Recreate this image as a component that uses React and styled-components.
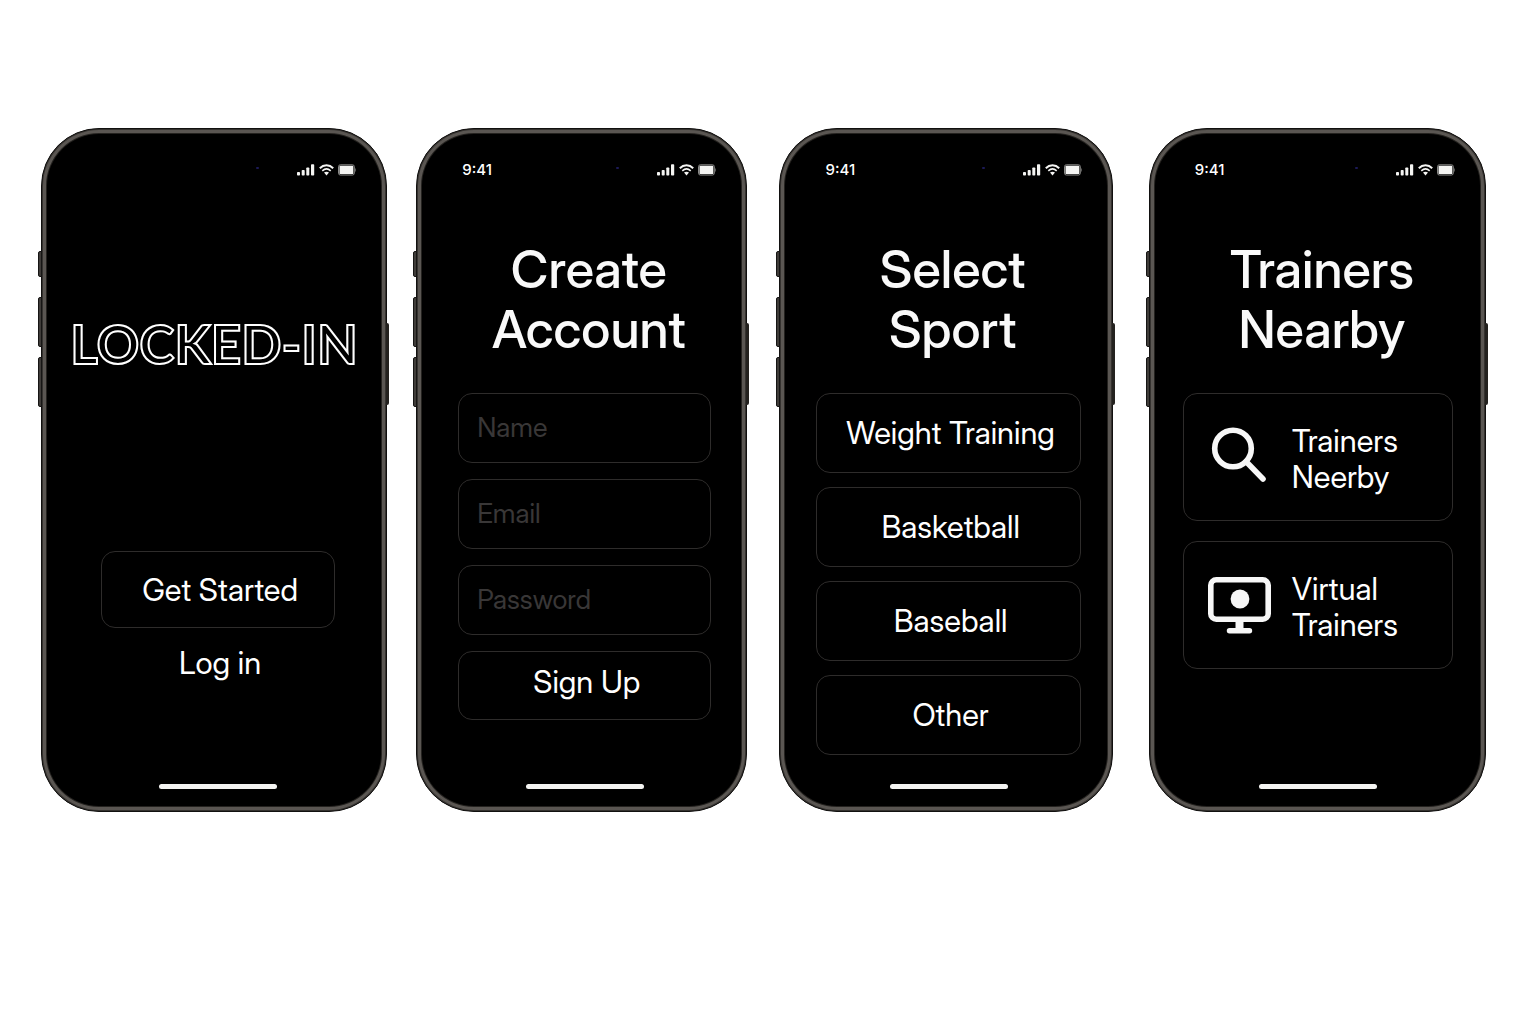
import React from "react";
import styled, { createGlobalStyle } from "styled-components";

const sports = ["Weight Training", "Basketball", "Baseball", "Other"];

const fields = [
  { name: "name", label: "Name", type: "text" },
  { name: "email", label: "Email", type: "email" },
  { name: "password", label: "Password", type: "password" },
];

const SignalIcon = () => (
  <svg width="18" height="12" viewBox="0 0 18 12" fill="#f4f4f2" aria-hidden="true">
    <rect x="0" y="8" width="3" height="3.5" rx="0.8" />
    <rect x="4.7" y="6" width="3" height="5.5" rx="0.8" />
    <rect x="9.3" y="3.5" width="3" height="8" rx="0.8" />
    <rect x="14" y="0.3" width="3.2" height="11.2" rx="0.8" />
  </svg>
);

const WifiIcon = () => (
  <svg width="15" height="12" viewBox="0 0 15 12" fill="none" stroke="#f4f4f2" aria-hidden="true">
    <path d="M0.8 4.2C4.6 0.4 10.4 0.4 14.2 4.2" strokeWidth="2" />
    <path d="M3.3 6.8C5.8 4.5 9.2 4.5 11.7 6.8" strokeWidth="1.6" />
    <path d="M5 8.6C6.5 7.3 8.5 7.3 10 8.6L7.5 11.4Z" fill="#f4f4f2" stroke="none" />
  </svg>
);

const BatteryIcon = () => (
  <svg width="18" height="12" viewBox="0 0 18 12" aria-hidden="true">
    <rect x="0.5" y="0.8" width="15.8" height="10.2" rx="1.8" fill="none" stroke="#8a8a88" />
    <rect x="1.5" y="1.8" width="13.8" height="8.2" rx="0.6" fill="#f4f4f2" />
    <path d="M17.3 4.5V7.5" stroke="#6a6a68" />
  </svg>
);

const SearchIcon = () => (
  <svg width="64" height="64" viewBox="0 0 64 64" fill="none" stroke="#f7f7f7" aria-hidden="true">
    <circle cx="26" cy="23.5" r="18.3" strokeWidth="5.6" />
    <path d="M39 36.5L56 54" strokeWidth="5.6" strokeLinecap="round" />
  </svg>
);

const MonitorIcon = () => (
  <svg width="64" height="64" viewBox="0 0 64 64" fill="none" stroke="#f7f7f7" aria-hidden="true">
    <rect x="3.8" y="6.8" width="57.4" height="39.4" rx="5.5" strokeWidth="5.6" />
    <circle cx="33" cy="26" r="9.4" fill="#f7f7f7" stroke="none" />
    <path d="M32.5 47V58" strokeWidth="8" />
    <path d="M22.5 57.8H42.5" strokeWidth="5.4" strokeLinecap="round" />
  </svg>
);

const Phone = ({ time, grow, gap, inset, children }) => (
  <Frame $grow={grow} $gap={gap}>
    <LeftKey $top={122} $height={26} />
    <LeftKey $top={168} $height={50} />
    <LeftKey $top={228} $height={50} />
    <RightKey />
    <StatusBar>
      <Time>{time}</Time>
      <Camera />
      <StatusIcons>
        <SignalIcon />
        <WifiIcon />
        <BatteryIcon />
      </StatusIcons>
    </StatusBar>
    <Screen $inset={inset}>
      {children}
      <HomeBar />
    </Screen>
  </Frame>
);

const Heading = ({ lines }) => (
  <Title>
    {lines.map((line) => (
      <span key={line}>{line}</span>
    ))}
  </Title>
);

export default function App() {
  return (
    <>
      <GlobalStyle />
      <Stage>
        <Phone grow={346} gap={0} inset="0 51px 0 59px">
          <Logo>LOCKED-IN</Logo>
          <StartButton type="button">Get Started</StartButton>
          <LoginLink href="#login">Log in</LoginLink>
        </Phone>

        <Phone time="9:41" grow={331} gap={29} inset="0 35px 0 41px">
          <Heading lines={["Create", "Account"]} />
          <Form onSubmit={(e) => e.preventDefault()}>
            {fields.map((field) => (
              <Input
                key={field.name}
                name={field.name}
                type={field.type}
                placeholder={field.label}
                aria-label={field.label}
              />
            ))}
            <SignUpButton type="submit">Sign Up</SignUpButton>
          </Form>
        </Phone>

        <Phone time="9:41" grow={333} gap={32} inset="0 31px 0 36px">
          <Heading lines={["Select", "Sport"]} />
          <SportList>
            {sports.map((sport) => (
              <SportButton type="button" key={sport}>
                {sport}
              </SportButton>
            ))}
          </SportList>
        </Phone>

        <Phone time="9:41" grow={337} gap={36} inset="0 32px 0 33px">
          <Heading lines={["Trainers", "Nearby"]} />
          <CardList>
            <Card type="button">
              <SearchIcon />
              <CardText>
                <span>Trainers</span>
                <span>Neerby</span>
              </CardText>
            </Card>
            <Card type="button">
              <MonitorIcon />
              <CardText>
                <span>Virtual</span>
                <span>Trainers</span>
              </CardText>
            </Card>
          </CardList>
        </Phone>
      </Stage>
    </>
  );
}

const GlobalStyle = createGlobalStyle`
  * {
    box-sizing: border-box;
  }
  body {
    margin: 0;
    background: #ffffff;
    font-family: "Inter Display", Inter, "Liberation Sans", sans-serif;
  }
  button,
  input {
    font-family: inherit;
  }
`;

const Stage = styled.main`
  display: flex;
  align-items: stretch;
  padding: 128px 50px 128px 41px;
`;

const Frame = styled.section`
  position: relative;
  display: flex;
  flex-direction: column;
  flex: ${(props) => props.$grow} 1 0;
  min-width: 0;
  min-height: 684px;
  margin-left: ${(props) => props.$gap}px;
  padding-top: 29px;
  border: 1px solid #11100f;
  border-radius: 58px;
  background: #000000;
  box-shadow: inset 0 0 0 1px #35322f, inset 0 0 0 4px #5a5652, inset 0 0 0 5px #24221f;
  color: #ffffff;
`;

const LeftKey = styled.span`
  position: absolute;
  left: -4px;
  top: ${(props) => props.$top}px;
  width: 4px;
  height: ${(props) => props.$height}px;
  border: 1px solid #161514;
  border-radius: 2px 0 0 2px;
  background: #3f3c39;
`;

const RightKey = styled.span`
  position: absolute;
  right: -3px;
  top: 194px;
  width: 3px;
  height: 82px;
  border-radius: 0 2px 2px 0;
  background: #24221f;
`;

const StatusBar = styled.div`
  display: flex;
  align-items: center;
  height: 24px;
  padding: 0 30px 0 45px;
`;

const Time = styled.span`
  flex: 1;
  font-family: Inter, sans-serif;
  font-size: 15px;
  font-weight: 500;
  line-height: 24px;
`;

const Camera = styled.span`
  width: 3px;
  height: 2px;
  margin: 0 38px 4px 0;
  border-radius: 1px;
  background: #1c1a58;
`;

const StatusIcons = styled.div`
  display: flex;
  align-items: center;
  gap: 4px;
`;

const Screen = styled.div`
  display: flex;
  flex-direction: column;
  align-items: center;
  flex: 1;
  padding: ${(props) => props.$inset};
`;

const HomeBar = styled.div`
  width: 118px;
  height: 5px;
  margin: auto 0 22px;
  border-radius: 3px;
  background: #f4f4f2;
`;

const Title = styled.h1`
  display: flex;
  flex-direction: column;
  align-items: center;
  margin: 58px 0 33px;
  padding-left: 8px;
  font-size: 52px;
  font-weight: 500;
  line-height: 60px;
  color: #f9f9f9;

  span {
    white-space: nowrap;
  }
`;

const Logo = styled.h1`
  margin: 132px 0 0;
  padding-right: 8px;
  font-family: Lato, sans-serif;
  font-size: 53px;
  font-weight: 700;
  line-height: 60px;
  white-space: nowrap;
  color: #000000;
  -webkit-text-stroke: 2px #ffffff;
`;

const Outlined = styled.button`
  width: 100%;
  padding: 0 0 0 4px;
  border: 1px solid #2e2c2b;
  border-radius: 14px;
  background: transparent;
  color: #ffffff;
  font-size: 31px;
  font-weight: 400;
  line-height: 36px;
  cursor: pointer;
`;

const StartButton = styled(Outlined)`
  height: 77px;
  margin-top: 177px;
`;

const LoginLink = styled.a`
  margin-top: 17px;
  padding-left: 4px;
  font-size: 31px;
  line-height: 36px;
  color: #ffffff;
  text-decoration: none;
`;

const Form = styled.form`
  display: flex;
  flex-direction: column;
  gap: 16px;
  width: 100%;
`;

const Input = styled.input`
  width: 100%;
  height: 70px;
  padding: 0 18px 2px;
  border: 1px solid #2e2c2b;
  border-radius: 14px;
  background: transparent;
  color: #ffffff;
  font-size: 27px;
  outline: none;

  &::placeholder {
    color: #393737;
    opacity: 1;
  }
`;

const SignUpButton = styled(Outlined)`
  height: 69px;
  padding-bottom: 8px;
`;

const SportList = styled.div`
  display: flex;
  flex-direction: column;
  gap: 14px;
  width: 100%;
`;

const SportButton = styled(Outlined)`
  height: 80px;
`;

const CardList = styled.div`
  display: flex;
  flex-direction: column;
  gap: 20px;
  width: 100%;
`;

const Card = styled(Outlined)`
  display: flex;
  align-items: center;
  gap: 21px;
  height: 128px;
  padding: 0 23px;
  text-align: left;
`;

const CardText = styled.span`
  display: flex;
  flex-direction: column;
  padding-top: 4px;
`;
